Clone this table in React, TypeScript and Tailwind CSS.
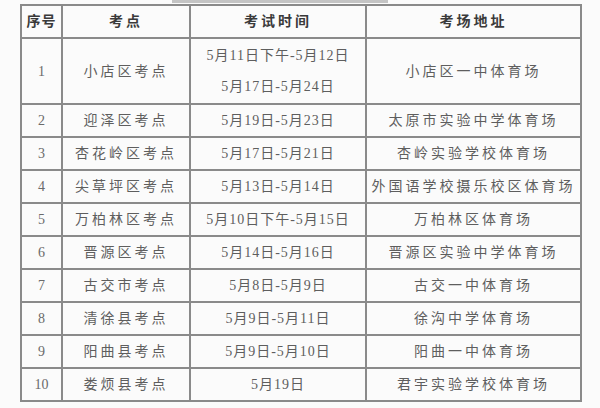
const rows = [
  { no: '1', site: '小店区考点', time: ['5月11日下午-5月12日', '5月17日-5月24日'], place: '小店区一中体育场' },
  { no: '2', site: '迎泽区考点', time: ['5月19日-5月23日'], place: '太原市实验中学体育场' },
  { no: '3', site: '杏花岭区考点', time: ['5月17日-5月21日'], place: '杏岭实验学校体育场' },
  { no: '4', site: '尖草坪区考点', time: ['5月13日-5月14日'], place: '外国语学校摄乐校区体育场' },
  { no: '5', site: '万柏林区考点', time: ['5月10日下午-5月15日'], place: '万柏林区体育场' },
  { no: '6', site: '晋源区考点', time: ['5月14日-5月16日'], place: '晋源区实验中学体育场' },
  { no: '7', site: '古交市考点', time: ['5月8日-5月9日'], place: '古交一中体育场' },
  { no: '8', site: '清徐县考点', time: ['5月9日-5月11日'], place: '徐沟中学体育场' },
  { no: '9', site: '阳曲县考点', time: ['5月9日-5月10日'], place: '阳曲一中体育场' },
  { no: '10', site: '娄烦县考点', time: ['5月19日'], place: '君宇实验学校体育场' },
];

const font = { fontFamily: '"Liberation Serif", "Noto Sans CJK SC", serif' };

export default function App() {
  return (
    <div className="w-[600px] h-[408px] bg-[#fbfbfb] overflow-hidden" style={font}>
      <div className="flex h-[4px]">
        <div className="w-[172px]" />
        <div className="w-[216px] h-[3px] bg-[#c4c4c4]" />
      </div>
      <div className="pl-[20px]">
        <table className="table-fixed border-collapse border-2 border-[#8a8a8a] text-[14px] text-[#5e5e5e]">
          <colgroup>
            <col className="w-[41px]" />
            <col className="w-[128px]" />
            <col className="w-[176px]" />
            <col className="w-[215px]" />
          </colgroup>
          <thead>
            <tr className="h-[33px] font-bold text-[#3a3a3a] tracking-[3px]">
              <th className="border-2 border-[#8a8a8a] p-0 tracking-[1px]">序号</th>
              <th className="border-2 border-[#8a8a8a] p-0">考点</th>
              <th className="border-2 border-[#8a8a8a] p-0">考试时间</th>
              <th className="border-2 border-[#8a8a8a] p-0">考场地址</th>
            </tr>
          </thead>
          <tbody>
            {rows.map((r) => (
              <tr key={r.no} className={r.time.length > 1 ? 'h-[66px]' : 'h-[33px]'}>
                <td className="border-2 border-[#8a8a8a] p-0 text-center text-[#6a6a6a]">{r.no}</td>
                <td className="border-2 border-[#8a8a8a] p-0 text-center tracking-[3px]">{r.site}</td>
                <td className="border-2 border-[#8a8a8a] p-0 text-center tracking-[1px]">
                  {r.time.map((t) => (
                    <div key={t} className="leading-[31px]">{t}</div>
                  ))}
                </td>
                <td className="border-2 border-[#8a8a8a] p-0 text-center tracking-[3px] whitespace-nowrap">{r.place}</td>
              </tr>
            ))}
          </tbody>
        </table>
      </div>
    </div>
  );
}
